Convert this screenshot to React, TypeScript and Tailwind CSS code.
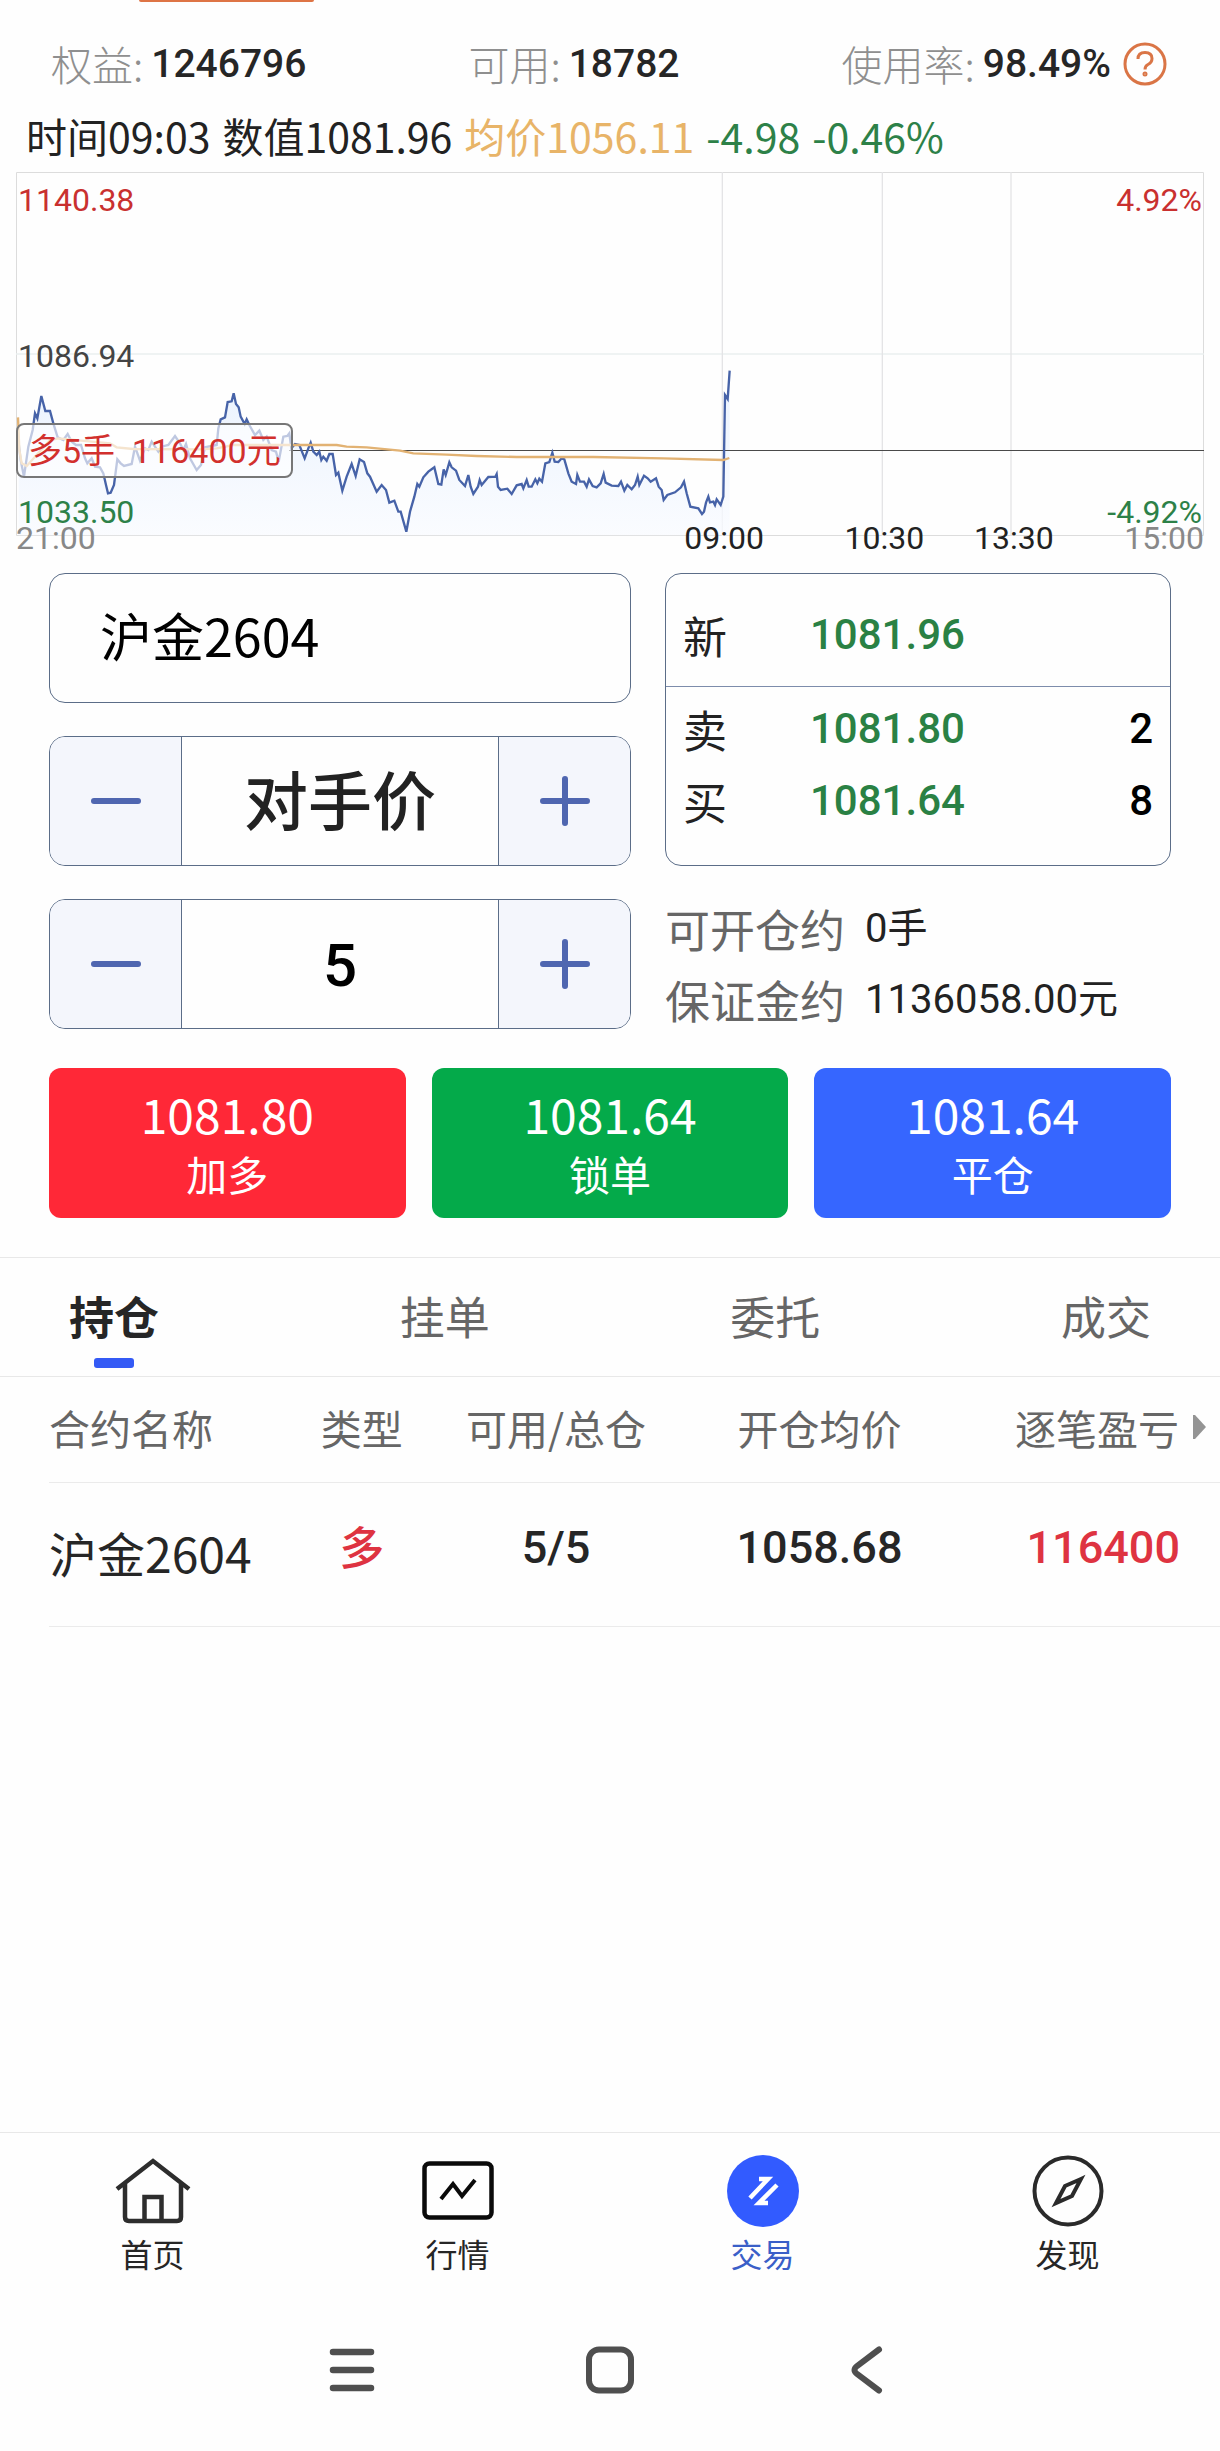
import { useState } from 'react';

const TABS = ['持仓', '挂单', '委托', '成交'];

const TIMES = [
  { label: '21:00', className: 'left-0 text-[#888]' },
  { label: '09:00', className: 'left-[59.6%] -translate-x-1/2 text-[#222]' },
  { label: '10:30', className: 'left-[73.1%] -translate-x-1/2 text-[#222]' },
  { label: '13:30', className: 'left-[84%] -translate-x-1/2 text-[#222]' },
  { label: '15:00', className: 'right-0 text-[#888]' }
];

const ORDERS = [
  { price: '1081.80', label: '加多', className: 'bg-[#ff2837]' },
  { price: '1081.64', label: '锁单', className: 'bg-[#04aa4a]' },
  { price: '1081.64', label: '平仓', className: 'bg-[#3666ff]' }
];

// Price and average lines, drawn in the units of the chart's viewBox
const PRICE =
  '56,340 62,390 72,440 85,350 98,300 105,250 112,265 124,198 136,243 150,243 160,280 173,322 190,330 203,312 215,335 228,345 243,345 255,385 262,400 275,385 285,410 300,412 310,430 318,465 324,490 332,488 342,465 352,388 362,400 372,408 395,402 405,350 420,392 435,355 445,360 455,335 475,365 485,350 505,345 525,318 540,340 550,360 558,342 570,385 590,420 603,405 615,352 650,345 655,295 662,268 675,262 683,216 695,214 701,190 708,222 716,232 722,260 734,282 740,268 748,285 765,315 778,302 790,330 800,320 815,360 828,365 836,395 850,320 862,318 868,310 874,355 885,342 898,345 914,385 925,355 932,338 940,365 950,375 958,365 964,390 970,380 980,392 988,372 998,372 1008,435 1015,428 1027,482 1040,440 1055,402 1067,438 1079,388 1092,396 1102,430 1110,440 1130,485 1145,465 1158,480 1168,518 1183,512 1195,545 1202,545 1219,605 1230,545 1243,500 1252,462 1258,470 1270,442 1285,425 1303,412 1315,462 1324,464 1331,418 1337,435 1348,397 1355,412 1368,422 1378,450 1395,468 1405,435 1412,470 1420,492 1434,470 1439,450 1445,465 1465,441 1486,440 1490,432 1494,470 1502,480 1522,476 1535,492 1550,466 1565,462 1570,475 1580,450 1586,470 1595,470 1606,448 1612,460 1618,446 1626,455 1636,400 1648,396 1657,368 1664,395 1675,396 1685,385 1693,388 1705,430 1715,455 1728,462 1732,435 1740,455 1752,455 1760,470 1767,448 1778,468 1790,472 1802,460 1811,432 1817,458 1835,467 1855,468 1863,455 1873,482 1882,465 1895,478 1905,465 1913,440 1918,465 1932,437 1943,445 1952,455 1968,445 1976,470 1985,480 1991,510 2002,495 2025,487 2043,472 2052,455 2060,490 2071,530 2095,535 2106,552 2112,545 2118,518 2125,500 2130,517 2140,515 2145,525 2150,508 2162,525 2170,500 2175,195 2183,207 2189,122';

const AVERAGE =
  '54,262 58,360 65,400 80,408 150,330 175,325 330,340 350,352 400,357 600,358 650,355 700,345 900,345 1010,345 1040,350 1100,352 1200,362 1240,370 1340,374 1430,378 1550,381 1780,381 1990,385 2170,390 2188,384';

function Chart() {
  return (
    <div className="relative mx-4 h-[364px] font-['Roboto','Noto_Sans_CJK_SC',sans-serif] text-[32px] leading-6">
      <svg className="block h-full w-full" viewBox="48 -474 3564 1092" preserveAspectRatio="none">
        <defs>
          <linearGradient id="area" x1="0" y1="0" x2="0" y2="1">
            <stop offset="0" stopColor="#e3eefd" />
            <stop offset="1" stopColor="#f9fbff" />
          </linearGradient>
        </defs>
        <g stroke="#dcdcdc" strokeWidth="3" fill="none">
          <path d="M49.5-472.5h3561v1089h-3561z" />
          <path d="M48 72h3564" stroke="#eaefef" strokeWidth="5" />
          <path d="M2167-474v1092M2647-474v1092M3033-474v1092" stroke="#e4e4e6" strokeWidth="4" />
        </g>
        <polygon points={`56,616 ${PRICE} 2189,616`} fill="url(#area)" fillOpacity="0.75" />
        <path d="M867 361.500h2745" stroke="#4a4a4a" strokeWidth="3" />
        <polyline points={PRICE} fill="none" stroke="#4763a8" strokeWidth="7" />
        <polyline points={AVERAGE} fill="none" stroke="#e2b273" strokeWidth="7" />
      </svg>

      <span className="absolute left-0.5 top-4 text-[#c9302f]">1140.38</span>
      <span className="absolute right-0.5 top-4 text-[#c9302f]">4.92%</span>
      <span className="absolute left-0.5 top-[172px] text-[#444]">1086.94</span>
      <span className="absolute bottom-3 left-0.5 text-[#2d8148]">1033.50</span>
      <span className="absolute bottom-3 right-0.5 text-[#2d8148]">-4.92%</span>
      {TIMES.map(time => (
        <span key={time.label} className={`absolute -bottom-3.5 ${time.className}`}>{time.label}</span>
      ))}

      <div className="absolute left-0 top-[251px] flex h-[55px] items-center whitespace-pre rounded-lg border-2 border-[#777] bg-white/65 px-2.5 text-[34px] text-[#d2302d]">
        多5手  116400元
      </div>
    </div>
  );
}

function Stepper({ label, value, onChange, onStep, className }: {
  label: string;
  value: string;
  onChange: (value: string) => void;
  onStep: (step: number) => void;
  className: string;
}) {
  return (
    <div className="flex h-[130px] overflow-hidden rounded-2xl border border-[#5b6d88]">
      <button type="button" aria-label={`${label} -`} onClick={() => onStep(-1)} className="flex w-[132px] shrink-0 items-center justify-center border-r border-[#5b6d88] bg-[#f4f6fc]">
        <svg width="50" height="50" viewBox="0 0 50 50" stroke="#4f66b0" strokeWidth="6" strokeLinecap="round">
          <path d="M3 25h44" />
        </svg>
      </button>
      <input
        type="text"
        aria-label={label}
        value={value}
        onChange={(e) => onChange(e.target.value)}
        className={`min-w-0 flex-1 bg-transparent text-center font-medium outline-none ${className}`}
      />
      <button type="button" aria-label={`${label} +`} onClick={() => onStep(1)} className="flex w-[132px] shrink-0 items-center justify-center border-l border-[#5b6d88] bg-[#f4f6fc]">
        <svg width="50" height="50" viewBox="0 0 50 50" stroke="#4f66b0" strokeWidth="6" strokeLinecap="round">
          <path d="M3 25h44M25 3v44" />
        </svg>
      </button>
    </div>
  );
}

function Account({ label, value }: { label: string; value: string }) {
  return (
    <div className="flex items-center gap-2">
      <span className="font-light text-[#8f8f8f]">{label}:</span>
      <span className="font-['Roboto',sans-serif] text-[39px] font-medium text-[#262626]">{value}</span>
    </div>
  );
}

function HomeIcon() {
  return (
    <svg width="76" height="72" viewBox="0 0 76 72" fill="none" stroke="#2d2d2d" strokeWidth="4.500">
      <path d="M2 34 38 6l36 28M10 29v33q0 4 4 4h48q4 0 4-4V29M29.500 66V42h17v24" />
    </svg>
  );
}

function MarketIcon() {
  return (
    <svg width="76" height="72" viewBox="0 0 76 72" fill="none" stroke="#0a0a0a" strokeWidth="4.500">
      <rect x="4.500" y="8.500" width="67" height="54" rx="5" />
      <path d="M21 44 33 29l9 12 13-16" strokeWidth="4" />
    </svg>
  );
}

function TradeIcon() {
  return (
    <svg width="76" height="72" viewBox="0 0 76 72">
      <circle cx="38" cy="36" r="36" fill="#325bff" />
      <path d="M34 24h9L25 43M52 30 34 48h9" fill="none" stroke="#fff" strokeWidth="4.500" />
    </svg>
  );
}

function CompassIcon() {
  return (
    <svg width="76" height="72" viewBox="0 0 76 72" fill="none" stroke="#2a2a2a" strokeWidth="4">
      <circle cx="38" cy="36" r="33.500" />
      <path d="M51 24 35 31 26 48l16-7z" />
    </svg>
  );
}

const NAV = [
  { label: '首页', icon: HomeIcon },
  { label: '行情', icon: MarketIcon },
  { label: '交易', icon: TradeIcon },
  { label: '发现', icon: CompassIcon }
];

export default function App() {
  const [contract, setContract] = useState('沪金2604');
  const [price, setPrice] = useState('对手价');
  const [lots, setLots] = useState('5');
  const [tab, setTab] = useState('持仓');

  const stepLots = (step: number) => {
    setLots(prev => String(Math.max(0, Number(prev) + step)));
  };

  return (
    <div className="flex min-h-screen flex-col overflow-hidden bg-[#fefefe] font-['Noto_Sans_CJK_SC',sans-serif] text-[#222]">
      <div className="ml-[139px] h-0.5 w-[175px] rounded-b bg-[#de7445]" />

      {/* Account */}
      <div className="mt-8 flex h-[60px] items-center justify-between pl-[51px] pr-[53px] text-[41px]">
        <Account label="权益" value="1246796" />
        <Account label="可用" value="18782" />
        <div className="flex items-center gap-3">
          <Account label="使用率" value="98.49%" />
          <button type="button" aria-label="使用率">
            <svg className="block" width="44" height="44" viewBox="0 0 44 44" fill="none" stroke="#da7546" strokeWidth="3">
              <circle cx="22" cy="22" r="20" />
              <path d="M15 17q0-6.500 7-6.500t7 6q0 4-4 6-3 1.500-3 5" />
              <circle cx="22" cy="32" r="1" />
            </svg>
          </button>
        </div>
      </div>

      {/* Quote line */}
      <div className="flex h-[78px] items-center gap-3 whitespace-nowrap px-[26px] pt-1.5 text-[41px]">
        <span>时间09:03</span>
        <span>数值1081.96</span>
        <span className="text-[#e8b468]">均价1056.11</span>
        <span className="text-[#2d8148]">-4.98</span>
        <span className="text-[#2d8148]">-0.46%</span>
      </div>

      <Chart />

      {/* Order form */}
      <div className="mt-[37px] grid grid-cols-[582fr_506fr] gap-x-[34px] px-[49px]">
        <div className="flex min-w-0 flex-col gap-[33px]">
          <input
            type="text"
            aria-label="合约"
            value={contract}
            onChange={(e) => setContract(e.target.value)}
            className="h-[130px] w-full rounded-2xl border border-[#5b6d88] bg-transparent px-[50px] pb-2 text-[52px] text-black outline-none"
          />
          <Stepper label="价格" value={price} onChange={setPrice} onStep={() => setPrice('对手价')} className="pb-2 text-[64px]" />
          <Stepper label="手数" value={lots} onChange={setLots} onStep={stepLots} className="pt-1 font-['Roboto',sans-serif] text-[60px] text-black" />
        </div>

        <div className="min-w-0">
          <table className="h-[293px] w-full border-separate border-spacing-0 rounded-2xl border border-[#5b6d88] text-[44px] leading-[72px]">
            <tbody>
              <tr>
                <th scope="row" className="h-[113px] w-[144px] border-b border-[#7d8cab] pb-0 pl-[17px] pt-2.5 text-left font-normal">新</th>
                <td className="border-b border-[#7d8cab] pt-2.5 font-['Roboto',sans-serif] text-[42px] font-medium text-[#2a8144]">1081.96</td>
                <td className="border-b border-[#7d8cab]" />
              </tr>
              <tr>
                <th scope="row" className="pl-[17px] pt-1.5 text-left font-normal">卖</th>
                <td className="pt-1.5 font-['Roboto',sans-serif] text-[42px] font-medium text-[#2a8144]">1081.80</td>
                <td className="pr-[17px] pt-1.5 text-right font-['Roboto',sans-serif] text-[42px] font-medium text-black">2</td>
              </tr>
              <tr>
                <th scope="row" className="pb-7 pl-[17px] text-left font-normal">买</th>
                <td className="pb-7 font-['Roboto',sans-serif] text-[42px] font-medium text-[#2a8144]">1081.64</td>
                <td className="pb-7 pr-[17px] text-right font-['Roboto',sans-serif] text-[42px] font-medium text-black">8</td>
              </tr>
            </tbody>
          </table>
          <div className="mt-[27px] whitespace-nowrap text-[45px] leading-[71px] text-[#666]">
            <div className="flex gap-5">
              <span>可开仓约</span>
              <span className="font-['Roboto','Noto_Sans_CJK_SC',sans-serif] text-[40px] text-[#222]">0手</span>
            </div>
            <div className="flex gap-5">
              <span>保证金约</span>
              <span className="font-['Roboto','Noto_Sans_CJK_SC',sans-serif] text-[40px] text-[#222]">1136058.00元</span>
            </div>
          </div>
        </div>
      </div>

      <div className="mt-[33px] grid grid-cols-3 gap-[26px] px-[49px]">
        {ORDERS.map(order => (
          <button key={order.label} type="button" className={`flex h-[150px] flex-col items-center justify-center rounded-xl text-white ${order.className}`}>
            <span className="text-[48px] leading-[60px]">{order.price}</span>
            <span className="text-[41px] leading-[60px]">{order.label}</span>
          </button>
        ))}
      </div>

      {/* Tabs */}
      <div className="mt-[39px] flex h-[120px] justify-between border-y border-[#e8e8e8] px-[69px] text-[45px]">
        {TABS.map(item => (
          <button
            key={item}
            type="button"
            onClick={() => setTab(item)}
            className={`flex flex-col items-center pt-[22px] leading-[72px] ${tab === item ? 'font-bold text-[#262626]' : 'text-[#666]'}`}
          >
            {item}
            {tab === item && <span className="mt-1.5 h-2.5 w-10 rounded-[3px] bg-[#345af5]" />}
          </button>
        ))}
      </div>

      {/* Positions */}
      <table className="ml-[49px] table-fixed text-center">
        <thead>
          <tr className="h-[105px] text-[41px] text-[#666]">
            <th className="w-[20.600%] border-b border-[#ebebeb] pb-1 text-left font-normal">合约名称</th>
            <th className="w-[12.200%] border-b border-[#ebebeb] pb-1 font-normal">类型</th>
            <th className="w-[21%] border-b border-[#ebebeb] pb-1 font-normal">可用/总仓</th>
            <th className="w-[24%] border-b border-[#ebebeb] pb-1 font-normal">开仓均价</th>
            <th className="border-b border-[#ebebeb] pb-1 font-normal">
              <span className="flex items-center justify-end gap-3.5 pr-3.5">
                逐笔盈亏
                <svg width="13" height="24" viewBox="0 0 13 24" fill="#949494">
                  <path d="M0 0h2l11 12L2 24H0z" />
                </svg>
              </span>
            </th>
          </tr>
        </thead>
        <tbody>
          <tr className="h-36 whitespace-nowrap font-['Roboto',sans-serif] text-[45px] font-medium text-[#262626]">
            <td className="border-b border-[#ebebeb] pb-1 text-left font-['Noto_Sans_CJK_SC',sans-serif] text-[48px] font-normal">沪金2604</td>
            <td className="border-b border-[#ebebeb] pb-4 font-['Noto_Sans_CJK_SC',sans-serif] text-[#de3341]">多</td>
            <td className="border-b border-[#ebebeb] pb-3">5/5</td>
            <td className="border-b border-[#ebebeb] pb-3">1058.68</td>
            <td className="border-b border-[#ebebeb] pb-3 pr-10 text-right text-[#de3341]">116400</td>
          </tr>
        </tbody>
      </table>

      <nav className="mt-auto grid h-[156px] grid-cols-4 border-t border-[#e8e8e8] pt-[22px]">
        {NAV.map(({ label, icon: Icon }) => (
          <a key={label} href="#" className={`flex flex-col items-center gap-1 text-[32px] leading-11 ${label === '交易' ? 'text-[#3a5fc8]' : 'text-[#262626]'}`}>
            <Icon />
            {label}
          </a>
        ))}
      </nav>

      {/* System keys */}
      <div className="flex h-[163px] items-center justify-center gap-[210px]">
        <button type="button" aria-label="菜单">
          <svg className="block" width="48" height="48" viewBox="0 0 48 48" fill="none" stroke="#4f4f4f" strokeWidth="6.500" strokeLinecap="round">
            <path d="M5 6h38M5 24h38M5 42h38" />
          </svg>
        </button>
        <button type="button" aria-label="主页">
          <svg className="block" width="48" height="48" viewBox="0 0 48 48" fill="none" stroke="#4f4f4f" strokeWidth="6">
            <rect x="3" y="3.500" width="42" height="41" rx="10" />
          </svg>
        </button>
        <button type="button" aria-label="返回">
          <svg className="block" width="48" height="48" viewBox="0 0 48 48" fill="none" stroke="#4f4f4f" strokeWidth="6" strokeLinecap="round">
            <path d="M35 3.500 13 20q-5 4 0 8l22 16.500" />
          </svg>
        </button>
      </div>
    </div>
  );
}
